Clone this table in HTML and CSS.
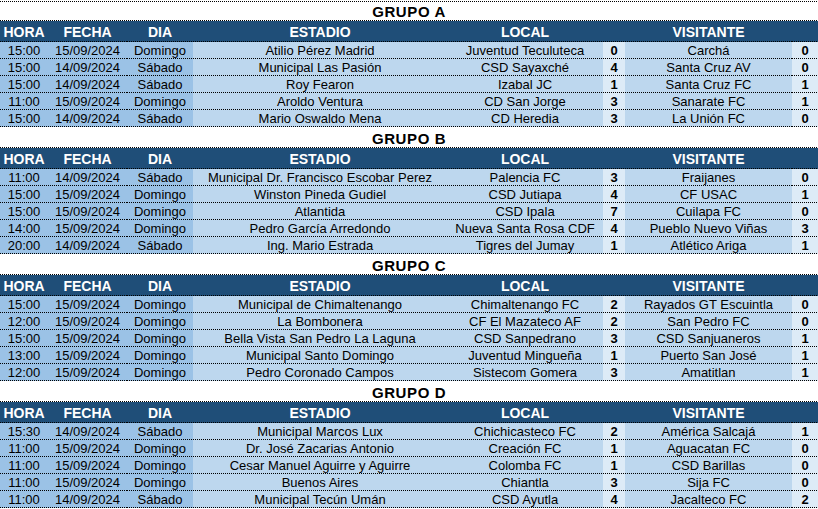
FILE: index.html
```
<!DOCTYPE html>
<html lang="es">
<head>
<meta charset="utf-8">
<title>Grupos</title>
<link rel="stylesheet" href="styles.css">
</head>
<body>
<div class="sheet">

<section class="group first">
  <div class="title">GRUPO A</div>
  <div class="row head"><div>HORA</div><div>FECHA</div><div>DIA</div><div>ESTADIO</div><div>LOCAL</div><div></div><div>VISITANTE</div><div></div></div>
  <div class="row data"><div>15:00</div><div>15/09/2024</div><div>Domingo</div><div>Atilio Pérez Madrid</div><div>Juventud Teculuteca</div><div class="sc">0</div><div>Carchá</div><div class="sc">0</div></div>
  <div class="row data"><div>15:00</div><div>14/09/2024</div><div>Sábado</div><div>Municipal Las Pasión</div><div>CSD Sayaxché</div><div class="sc">4</div><div>Santa Cruz AV</div><div class="sc">0</div></div>
  <div class="row data"><div>15:00</div><div>14/09/2024</div><div>Sábado</div><div>Roy Fearon</div><div>Izabal JC</div><div class="sc">1</div><div>Santa Cruz FC</div><div class="sc">1</div></div>
  <div class="row data"><div>11:00</div><div>15/09/2024</div><div>Domingo</div><div>Aroldo Ventura</div><div>CD San Jorge</div><div class="sc">3</div><div>Sanarate FC</div><div class="sc">1</div></div>
  <div class="row data"><div>15:00</div><div>14/09/2024</div><div>Sábado</div><div>Mario Oswaldo Mena</div><div>CD Heredia</div><div class="sc">3</div><div>La Unión FC</div><div class="sc">0</div></div>
</section>

<section class="group">
  <div class="title">GRUPO B</div>
  <div class="row head"><div>HORA</div><div>FECHA</div><div>DIA</div><div>ESTADIO</div><div>LOCAL</div><div></div><div>VISITANTE</div><div></div></div>
  <div class="row data"><div>11:00</div><div>14/09/2024</div><div>Sábado</div><div>Municipal Dr. Francisco Escobar Perez</div><div>Palencia FC</div><div class="sc">3</div><div>Fraijanes</div><div class="sc">0</div></div>
  <div class="row data"><div>15:00</div><div>15/09/2024</div><div>Domingo</div><div>Winston Pineda Gudiel</div><div>CSD Jutiapa</div><div class="sc">4</div><div>CF USAC</div><div class="sc">1</div></div>
  <div class="row data"><div>15:00</div><div>15/09/2024</div><div>Domingo</div><div>Atlantida</div><div>CSD Ipala</div><div class="sc">7</div><div>Cuilapa FC</div><div class="sc">0</div></div>
  <div class="row data"><div>14:00</div><div>15/09/2024</div><div>Domingo</div><div>Pedro García Arredondo</div><div>Nueva Santa Rosa CDF</div><div class="sc">4</div><div>Pueblo Nuevo Viñas</div><div class="sc">3</div></div>
  <div class="row data"><div>20:00</div><div>14/09/2024</div><div>Sábado</div><div>Ing. Mario Estrada</div><div>Tigres del Jumay</div><div class="sc">1</div><div>Atlético Ariga</div><div class="sc">1</div></div>
</section>

<section class="group">
  <div class="title">GRUPO C</div>
  <div class="row head"><div>HORA</div><div>FECHA</div><div>DIA</div><div>ESTADIO</div><div>LOCAL</div><div></div><div>VISITANTE</div><div></div></div>
  <div class="row data"><div>15:00</div><div>15/09/2024</div><div>Domingo</div><div>Municipal de Chimaltenango</div><div>Chimaltenango FC</div><div class="sc">2</div><div>Rayados GT Escuintla</div><div class="sc">0</div></div>
  <div class="row data"><div>12:00</div><div>15/09/2024</div><div>Domingo</div><div>La Bombonera</div><div>CF El Mazateco AF</div><div class="sc">2</div><div>San Pedro FC</div><div class="sc">0</div></div>
  <div class="row data"><div>15:00</div><div>15/09/2024</div><div>Domingo</div><div>Bella Vista San Pedro La Laguna</div><div>CSD Sanpedrano</div><div class="sc">3</div><div>CSD Sanjuaneros</div><div class="sc">1</div></div>
  <div class="row data"><div>13:00</div><div>15/09/2024</div><div>Domingo</div><div>Municipal Santo Domingo</div><div>Juventud Mingueña</div><div class="sc">1</div><div>Puerto San José</div><div class="sc">1</div></div>
  <div class="row data"><div>12:00</div><div>15/09/2024</div><div>Domingo</div><div>Pedro Coronado Campos</div><div>Sistecom Gomera</div><div class="sc">3</div><div>Amatitlan</div><div class="sc">1</div></div>
</section>

<section class="group">
  <div class="title">GRUPO D</div>
  <div class="row head"><div>HORA</div><div>FECHA</div><div>DIA</div><div>ESTADIO</div><div>LOCAL</div><div></div><div>VISITANTE</div><div></div></div>
  <div class="row data"><div>15:30</div><div>14/09/2024</div><div>Sábado</div><div>Municipal Marcos Lux</div><div>Chichicasteco FC</div><div class="sc">2</div><div>América Salcajá</div><div class="sc">1</div></div>
  <div class="row data"><div>11:00</div><div>15/09/2024</div><div>Domingo</div><div>Dr. José Zacarias Antonio</div><div>Creación FC</div><div class="sc">1</div><div>Aguacatan FC</div><div class="sc">0</div></div>
  <div class="row data"><div>11:00</div><div>15/09/2024</div><div>Domingo</div><div>Cesar Manuel Aguirre y Aguirre</div><div>Colomba FC</div><div class="sc">1</div><div>CSD Barillas</div><div class="sc">0</div></div>
  <div class="row data"><div>11:00</div><div>15/09/2024</div><div>Domingo</div><div>Buenos Aires</div><div>Chiantla</div><div class="sc">3</div><div>Sija FC</div><div class="sc">0</div></div>
  <div class="row data"><div>11:00</div><div>14/09/2024</div><div>Sábado</div><div>Municipal Tecún Umán</div><div>CSD Ayutla</div><div class="sc">4</div><div>Jacalteco FC</div><div class="sc">2</div></div>
</section>

</div>
</body>
</html>
```

FILE: styles.css
```
html, body {
  margin: 0;
  padding: 0;
  background: #ffffff;
}

body {
  width: 818px;
  font-family: "Liberation Sans", Arial, sans-serif;
  color: #000000;
  --dots: repeating-linear-gradient(90deg, #000000 0 1px, transparent 1px 2px);
}

.sheet {
  padding-top: 2px;
  background-image: var(--dots);
  background-repeat: no-repeat;
  background-position: left 1px;
  background-size: 100% 1px;
}

.title,
.row > div {
  box-sizing: border-box;
  background-image: var(--dots);
  background-repeat: no-repeat;
  background-position: left bottom;
  background-size: 100% 1px;
}

.title {
  height: 21px;
  padding-top: 4px;
  line-height: 16px;
  text-align: center;
  font-weight: bold;
  font-size: 15px;
  letter-spacing: 0.6px;
}

.group.first .title {
  height: 19px;
  padding-top: 2px;
}

.row {
  display: grid;
  grid-template-columns: 48px 79px 66px 254px 156px 22px 167px 26px;
}

.row > div {
  text-align: center;
  white-space: nowrap;
  overflow: hidden;
}

.head > div {
  height: 21px;
  padding-top: 2px;
  line-height: 18px;
  background-color: #1f4e78;
  color: #ffffff;
  font-weight: bold;
  font-size: 14px;
}

.data > div {
  height: 17px;
  padding-top: 2px;
  line-height: 14px;
  font-size: 13px;
  background-color: #bdd7ee;
}

.data > div:nth-child(-n+3) {
  background-color: #9bc2e6;
}

.data > .sc {
  background-color: #ddebf7;
  font-weight: bold;
}
```
